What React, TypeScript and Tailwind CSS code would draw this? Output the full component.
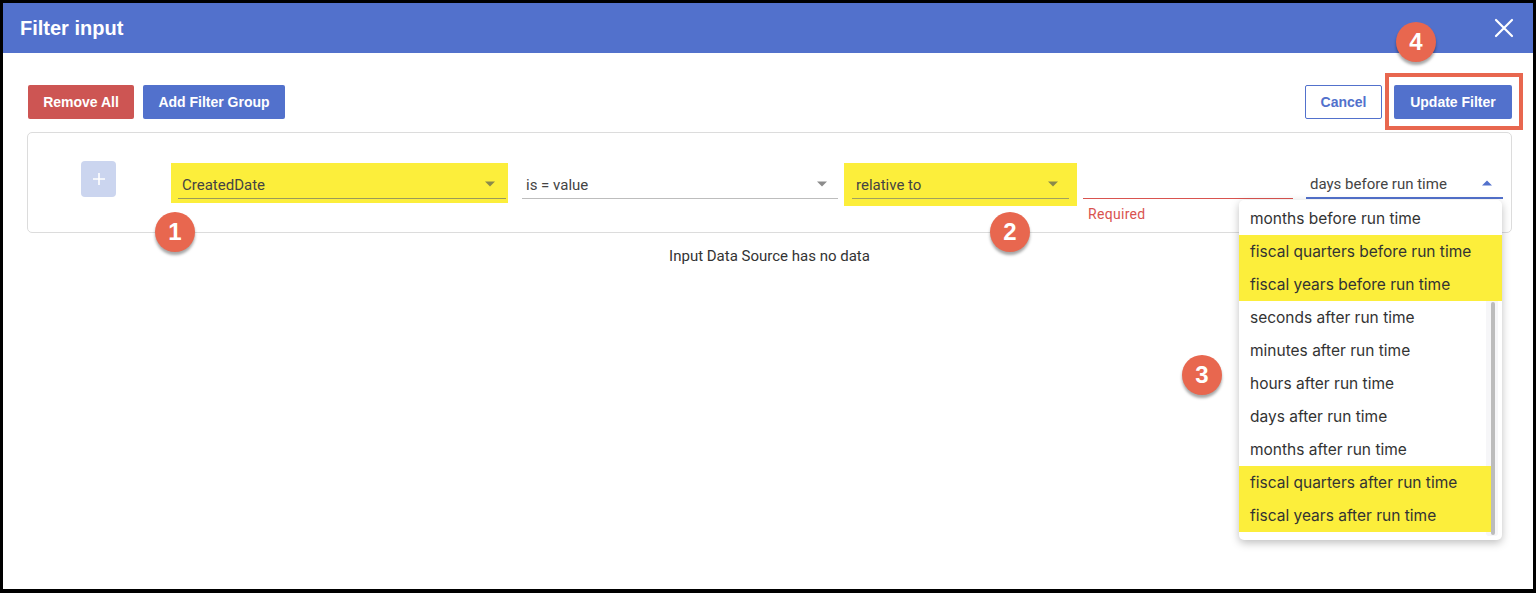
import React from "react";

const Badge = ({ n, className }: { n: string; className: string }) => (
  <div
    className={
      "absolute w-[40px] h-[40px] rounded-full bg-[#e8674f] text-white flex items-center justify-center text-[24px] font-bold shadow-[0_3px_3px_rgba(0,0,0,0.35)] z-30 " +
      className
    }
    style={{ fontFamily: '"Liberation Sans", Arial, sans-serif' }}
  >
    {n}
  </div>
);

const Arrow = ({ up, color }: { up?: boolean; color: string }) => (
  <svg width="10" height="6" viewBox="0 0 10 6" className="shrink-0">
    {up ? (
      <path d="M0 5.5 L5 0.5 L10 5.5 Z" fill={color} />
    ) : (
      <path d="M0 0.5 L5 5.5 L10 0.5 Z" fill={color} />
    )}
  </svg>
);

const Select = ({
  text,
  w,
  line,
  arrowColor,
  up,
}: {
  text: string;
  w: string;
  line: string;
  arrowColor: string;
  up?: boolean;
}) => (
  <div className={"h-[36px] flex items-end pb-[3px] pl-[4px] pr-[11px] justify-between " + w + " " + line}>
    <span className="text-[15px] leading-[20px] text-[#444]">{text}</span>
    <div className="pb-[8px]">
      <Arrow up={up} color={arrowColor} />
    </div>
  </div>
);

const items = [
  { t: "months before run time", y: false },
  { t: "fiscal quarters before run time", y: true },
  { t: "fiscal years before run time", y: true },
  { t: "seconds after run time", y: false },
  { t: "minutes after run time", y: false },
  { t: "hours after run time", y: false },
  { t: "days after run time", y: false },
  { t: "months after run time", y: false },
  { t: "fiscal quarters after run time", y: true, b: true },
  { t: "fiscal years after run time", y: true, b: true },
];

export default function App() {
  return (
    <div className="w-[1536px] h-[593px] bg-black pt-[3px] pl-[3px] pr-[3px] pb-[4px]">
      <div
        className="relative h-full bg-white flex flex-col"
        style={{ fontFamily: 'Roboto, "Liberation Sans", sans-serif' }}
      >
        <header className="h-[50px] shrink-0 bg-[#5271cc] flex items-center justify-between pl-[17px] pr-[19px]">
          <h1
            className="text-white text-[20px] font-bold leading-none"
            style={{ fontFamily: '"Liberation Sans", Arial, sans-serif' }}
          >
            Filter input
          </h1>
          <svg width="20" height="20" viewBox="0 0 20 20">
            <path d="M2 2 L18 18 M18 2 L2 18" stroke="white" strokeWidth="2.2" strokeLinecap="round" />
          </svg>
        </header>

        <div className="pl-[24px] pr-[21px] pt-[32px]">
          <div
            className="flex items-center justify-between h-[34px]"
            style={{ fontFamily: '"Liberation Sans", Arial, sans-serif' }}
          >
            <div className="flex gap-[9px] ml-[1px]">
              <button className="h-[34px] w-[106px] rounded-[2px] bg-[#cd5553] text-white text-[14px] font-bold">
                Remove All
              </button>
              <button className="h-[34px] w-[142px] rounded-[2px] bg-[#5271cc] text-white text-[14px] font-bold">
                Add Filter Group
              </button>
            </div>
            <div className="flex gap-[12px]">
              <button className="h-[34px] w-[77px] rounded-[2px] border border-[#5271cc] bg-white text-[#5271cc] text-[14px] font-bold">
                Cancel
              </button>
              <button className="h-[34px] w-[118px] rounded-[2px] bg-[#5271cc] text-white text-[14px] font-bold">
                Update Filter
              </button>
            </div>
          </div>

          <div className="mt-[13px] h-[101px] border border-[#dcdcdc] rounded-[5px] flex items-start pt-[28px] pl-[53px]">
            <div className="w-[35px] h-[36px] rounded-[4px] bg-[#cbd5ef] flex items-center justify-center">
              <svg width="14" height="14" viewBox="0 0 14 14">
                <path d="M7 1 V13 M1 7 H13" stroke="white" strokeWidth="1.6" />
              </svg>
            </div>

            <div className="ml-[55px] mt-[2px] flex items-start">
              <div className="w-[337px] h-[40px] bg-[#fcee3b] pl-[7px] pr-[2px]">
                <Select text="CreatedDate" w="w-full" line="border-b border-[#9a9a5a]" arrowColor="#8a8a4a" />
              </div>

              <div className="ml-[14px]">
                <Select text="is = value" w="w-[316px]" line="border-b border-[#bdbdbd]" arrowColor="#8c8c8c" />
              </div>

              <div className="ml-[6px] w-[233px] h-[43px] bg-[#fcee3b] px-[8px]">
                <Select text="relative to" w="w-full" line="border-b border-[#a0a060]" arrowColor="#8a8a4a" />
              </div>

              <div className="ml-[6px] w-[210px]">
                <div className="h-[36px] border-b border-[#d9534f]" />
                <div className="mt-[7px] pl-[5px] text-[14px] leading-[16px] text-[#d9534f] tracking-[0.3px]">Required</div>
              </div>

              <div className="relative ml-[13px]">
                <Select
                  text="days before run time"
                  w="w-[197px]"
                  line="border-b-2 border-[#5271cc]"
                  arrowColor="#5271cc"
                  up
                />
                <div
                  className="absolute left-[-67px] top-[37px] w-[263px] h-[340px] bg-white rounded-[5px] shadow-[0_3px_8px_rgba(0,0,0,0.25)] overflow-hidden z-20 pt-[2px]"
                  style={{ fontFamily: 'Inter, "Liberation Sans", sans-serif' }}
                >
                  <div className="absolute left-[247px] top-[98px] w-[12px] bottom-[4px] bg-[#f6f6f8] rounded-[3px]" />
                  {items.map((it) => (
                    <div
                      key={it.t}
                      className={
                        "relative h-[33px] flex items-center pl-[11px] text-[15.5px] text-[#333] whitespace-nowrap " +
                        (it.y ? "bg-[#fcee3b] " : "") +
                        (it.b ? "w-[254px]" : "w-full")
                      }
                    >
                      {it.t}
                    </div>
                  ))}
                  <div className="absolute left-[252px] top-[102px] w-[4px] h-[233px] bg-[#bcbcbc] rounded-full z-10" />
                </div>
              </div>
            </div>
          </div>

          <div className="mt-[13px] text-center text-[15px] leading-[20px] text-[#333]">
            Input Data Source has no data
          </div>
        </div>

        <div className="absolute left-[1382px] top-[70px] w-[138px] h-[57px] border-[4px] border-[#e8674f] z-10" />

        <Badge n="1" className="left-[152px] top-[209px]" />
        <Badge n="2" className="left-[987px] top-[209px]" />
        <Badge n="3" className="left-[1179px] top-[352px]" />
        <Badge n="4" className="left-[1393px] top-[19px]" />
      </div>
    </div>
  );
}
